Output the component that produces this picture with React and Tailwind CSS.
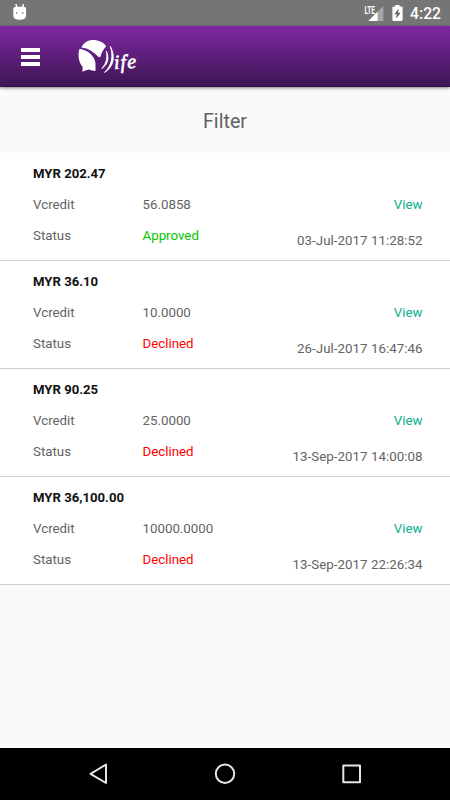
import React from 'react';

const transactions = [
  { id: 1, amount: 'MYR 202.47', vcredit: '56.0858', status: 'Approved', date: '03-Jul-2017 11:28:52' },
  { id: 2, amount: 'MYR 36.10', vcredit: '10.0000', status: 'Declined', date: '26-Jul-2017 16:47:46' },
  { id: 3, amount: 'MYR 90.25', vcredit: '25.0000', status: 'Declined', date: '13-Sep-2017 14:00:08' },
  { id: 4, amount: 'MYR 36,100.00', vcredit: '10000.0000', status: 'Declined', date: '13-Sep-2017 22:26:34' },
];

const StatusBar = () => (
  <div className="h-[26px] shrink-0 bg-[#757575] flex items-center justify-between pl-[13px] pr-[9px]">
    <svg className="w-[14px] h-[17px] mb-[2px]" viewBox="0 0 14 17" fill="#fff">
      <path d="M2.800 0 4 3.400M10.600 0 9.400 3.400" stroke="#fff" strokeWidth="1.400" />
      <path d="M.3 5Q.3 2.800 2.800 2.800h7.800Q13.100 2.800 13.100 5v6.500q0 4.300-6.400 4.300T.3 11.500z" />
      <circle cx="3.600" cy="9" r="0.800" fill="#666" />
      <circle cx="9.800" cy="9" r="0.800" fill="#666" />
    </svg>
    <div className="flex items-center">
      <svg className="w-[20px] h-[17px] mt-px" viewBox="0 0 20 17">
        <path d="M19.300 1v15H4.300z" fill="#a6a6a6" />
        <path d="M13.500 6.800V16H4.300z" fill="#fff" />
        <path d="M0 0h12v7.500L9.500 10H0z" fill="#757575" />
        <text x="0.500" y="8.500" fontSize="10.500" fontWeight="700" textLength="10.500" lengthAdjust="spacingAndGlyphs" fill="#fff">LTE</text>
      </svg>
      <svg className="w-[11px] h-[16px] ml-[8px]" viewBox="0 0 11 16">
        <path d="M3.400 0h4.200v1.600H9.500q1.100 0 1.100 1.100v12.100q0 1.100-1.100 1.100h-8Q.4 15.900.4 14.800V2.700Q.4 1.600 1.500 1.600h1.900z" fill="#fff" />
        <path d="M6.800 3.500 2.300 9.200h2.500l-.8 4.600L8.700 7.800H6.200z" fill="#666" />
      </svg>
      <span className="ml-[7px] mt-[2px] w-[31px] text-right text-[15.700px] leading-none font-medium text-white">4:22</span>
    </div>
  </div>
);

const Logo = () => (
  <svg className="w-[60px] h-[36px] ml-[37px]" viewBox="0 0 60 36" fill="#fff">
    <path d="M4.400 9.500C6.500 4.700 11 2.100 16.200 2.100c5.500 0 10.300 2.300 12.900 6.200-2.600 2.800-4.400 6.200-5.600 10.300-1 .8-1.700.7-2.500-.1C16.500 14 11.500 10.300 4.400 9.500z" />
    <path d="M2.600 10.800C10.400 12 17.400 17.300 18.500 25.300V33c-2.600-.1-4.500-1-6.500-1.500-1.900.5-4 1-6.900 2.300.6-2 .8-3.600.3-5.400C1.600 24.300.5 17 2.600 10.800z" />
    <path d="M29.300 13.200c1.500 6.500.3 12-4.600 17.300 6.600-4.200 7.600-11 4.600-17.300z" stroke="#fff" strokeWidth="1" />
    <path d="M33.300 8.400c3.200 9.600 1.700 18.600-5.800 26 9.600-5.600 11.200-16.400 5.800-26z" stroke="#fff" strokeWidth=".9" />
    <text x="37.300" y="31" transform="rotate(-3 37 31)" fontFamily="'Liberation Serif', serif" fontStyle="italic" fontSize="20" textLength="22" lengthAdjust="spacing" stroke="#fff" strokeWidth=".6">ife</text>
  </svg>
);

const Header = () => (
  <header className="relative z-10 h-[61px] shrink-0 flex items-center pl-[21px] bg-linear-to-b from-[#7f27a2] to-[#3f1656] border-b border-[#32104a] shadow-[0_1px_3px_rgba(0,0,0,0.5)]">
    <button className="flex flex-col gap-[3px] mt-[2px]" aria-label="Menu">
      <span className="w-[19px] h-[4px] bg-white"></span>
      <span className="w-[19px] h-[4px] bg-white"></span>
      <span className="w-[19px] h-[4px] bg-white"></span>
    </button>
    <Logo />
  </header>
);

const Transaction = ({ item }) => (
  <li className="h-[108px] flex justify-between bg-white border-b border-[#cfcfcf] pl-[33px] pr-[27.500px] pt-[5px] leading-[31px]">
    <div>
      <h2 className="font-bold text-[13.150px] text-[#111]">{item.amount}</h2>
      <div className="grid grid-cols-[109.500px_auto]">
        <span>Vcredit</span>
        <span>{item.vcredit}</span>
        <span>Status</span>
        <span className={item.status === 'Approved' ? 'text-[#00c800]' : 'text-[#ff0000]'}>{item.status}</span>
      </div>
    </div>
    <div className="flex flex-col items-end pt-[31px] gap-[5px]">
      <a className="text-[#0aaf8c]">View</a>
      <span className="tracking-[0.040px]">{item.date}</span>
    </div>
  </li>
);

const NavBar = () => (
  <nav className="h-[52px] shrink-0 bg-black">
    <svg className="w-full h-full" viewBox="0 0 450 52" fill="none" stroke="#e6e6e6" strokeWidth="2" strokeLinejoin="round">
      <path d="M106 16.500v18.500L90.500 25.800z" />
      <circle cx="225" cy="25.800" r="9.200" />
      <rect x="343.300" y="17.500" width="16.700" height="16.700" />
    </svg>
  </nav>
);

const App = () => {
  return (
    <div className="w-[450px] h-[800px] flex flex-col overflow-hidden bg-[#fafafa] font-['Roboto',sans-serif] text-[13.300px] text-[#636363]">
      <StatusBar />
      <Header />
      <main className="flex-1">
        <div className="h-[66px] flex items-center justify-center pt-[4px] text-[19.700px]">Filter</div>
        <ul>
          {transactions.map((item) => (
            <Transaction key={item.id} item={item} />
          ))}
        </ul>
      </main>
      <NavBar />
    </div>
  );
};

export default App;
